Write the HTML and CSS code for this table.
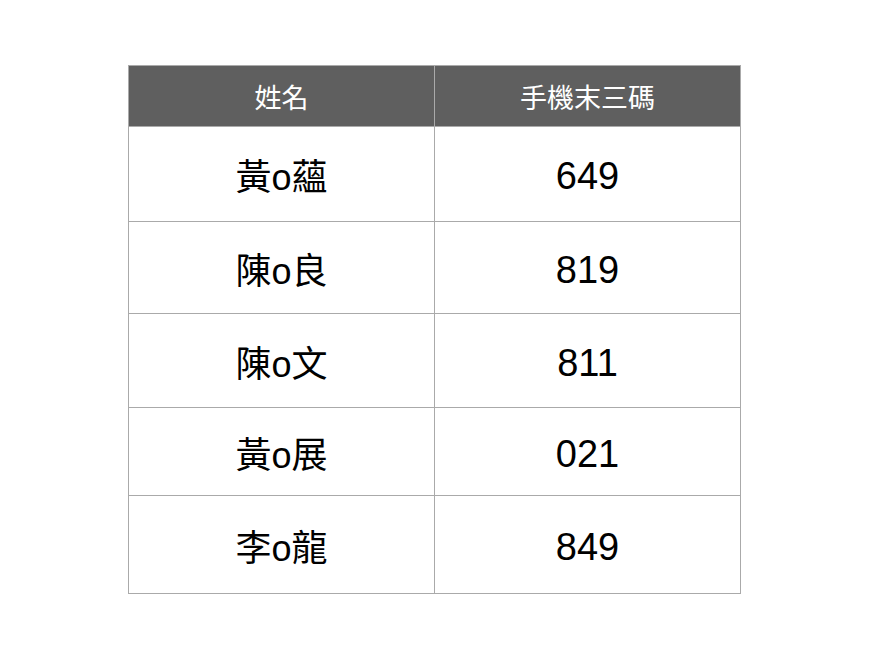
FILE: index.html
```html
<!DOCTYPE html>
<html lang="zh-Hant">
<head>
<meta charset="utf-8">
<link rel="stylesheet" href="styles.css">
</head>
<body>
<table class="list">
  <thead>
    <tr class="head"><th>姓名</th><th>手機末三碼</th></tr>
  </thead>
  <tbody>
    <tr class="r1"><td>黃o蘊</td><td class="num">649</td></tr>
    <tr class="r2"><td>陳o良</td><td class="num">819</td></tr>
    <tr class="r3"><td>陳o文</td><td class="num">811</td></tr>
    <tr class="r4"><td>黃o展</td><td class="num">021</td></tr>
    <tr class="r5"><td>李o龍</td><td class="num">849</td></tr>
  </tbody>
</table>
</body>
</html>
```
FILE: styles.css
```css
html, body { margin: 0; padding: 0; background: #fff; }
body {
  padding: 65px 0 0 128px;
  font-family: "Liberation Sans", "Noto Sans CJK TC", sans-serif;
}
.list {
  border-collapse: collapse;
  width: 613px;
  table-layout: fixed;
}
.list th, .list td {
  border: 1px solid #aaaaaa;
  text-align: center;
  vertical-align: middle;
  padding: 0;
}
.list th {
  background: #5f5f5f;
  color: #fff;
  font-weight: normal;
  font-size: 27px;
}
.list td {
  color: #000;
  font-size: 36px;
}
.list td.num {
  font-size: 38px;
  padding-top: 5px;
}
.head { height: 61px; }
.r1 { height: 95px; }
.r2 { height: 92px; }
.r3 { height: 94px; }
.r4 { height: 88px; }
.r5 { height: 98px; }
```
